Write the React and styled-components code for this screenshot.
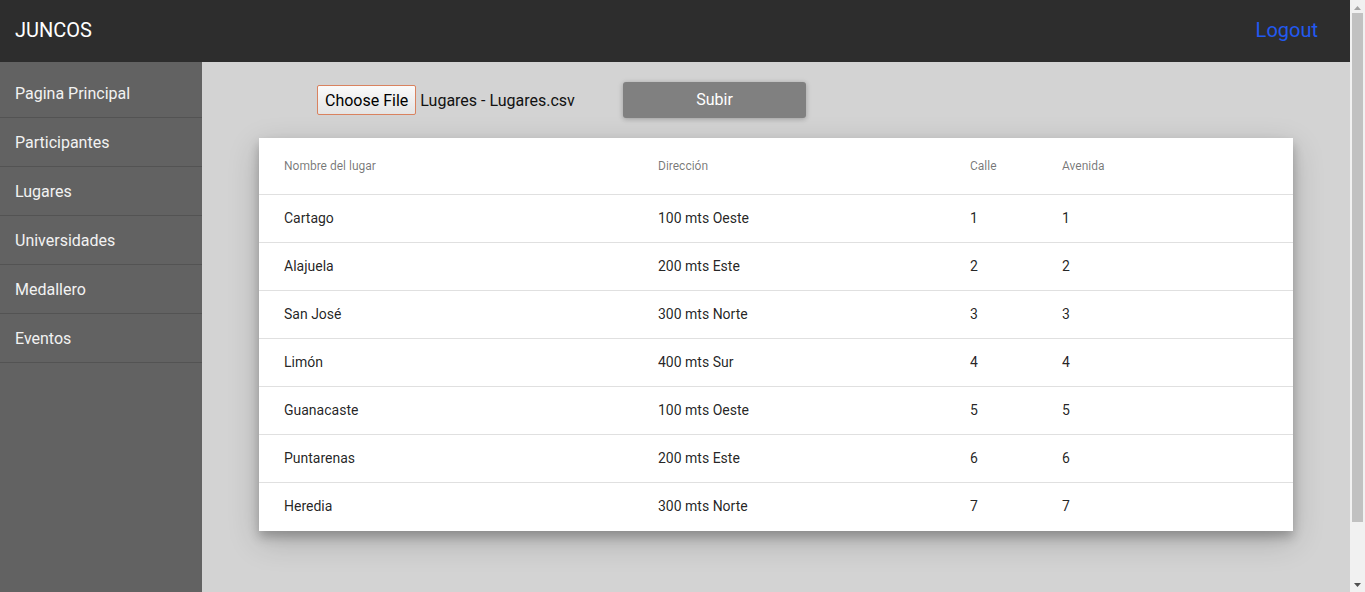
import React from "react";
import styled, { createGlobalStyle } from "styled-components";

const GlobalStyle = createGlobalStyle`
  html, body { margin: 0; padding: 0; }
  html, body { overflow: hidden; }
  body { font-family: Roboto, "Noto Sans", Arial, sans-serif; background: #d3d3d3; }
  * { box-sizing: border-box; }
`;

const Page = styled.div`
  display: flex;
  flex-direction: column;
  min-height: 652px;
  margin-right: 15px;
`;

const TopBar = styled.header`
  height: 62px;
  background: #2d2d2d;
  display: flex;
  align-items: center;
  justify-content: space-between;
  padding: 0 32px 0 15px;
  flex-shrink: 0;
`;

const Brand = styled.div`
  color: #ffffff;
  font-size: 20px;
  margin-top: -2px;
`;

const LogoutLink = styled.a`
  color: #2259f0;
  font-size: 20px;
  text-decoration: none;
  margin-top: -2px;
  cursor: pointer;
`;

const Body = styled.div`
  display: flex;
  flex: 1;
`;

const Sidebar = styled.nav`
  width: 202px;
  flex-shrink: 0;
  background: #626262;
  padding-top: 7px;
`;

const NavItem = styled.a`
  display: flex;
  align-items: center;
  height: 49px;
  padding: 1px 15px 0;
  color: #f2f2f2;
  font-size: 16px;
  border-bottom: 1px solid #535353;
  text-decoration: none;
  cursor: pointer;
`;

const Main = styled.main`
  flex: 1;
  padding: 20px 57px;
`;

const UploadRow = styled.div`
  display: flex;
  align-items: center;
  height: 36px;
  padding-left: 58px;
`;

const FileBlock = styled.div`
  display: flex;
  align-items: center;
  width: 306px;
`;

const ChooseButton = styled.button`
  height: 30px;
  padding: 0 7px;
  font-family: Roboto, "Noto Sans", Arial, sans-serif;
  font-size: 16px;
  color: #000;
  background: linear-gradient(#fafafa, #e4e4e4);
  border: 1px solid #d9825f;
  border-radius: 2px;
  cursor: pointer;
`;

const FileName = styled.span`
  margin-left: 4px;
  font-size: 16px;
  color: #111;
`;

const SubmitButton = styled.button`
  width: 183px;
  height: 36px;
  padding: 0 0 2px;
  background: #808080;
  color: #ffffff;
  font-family: Roboto, "Noto Sans", Arial, sans-serif;
  font-size: 16px;
  border: none;
  border-radius: 3px;
  box-shadow: 0 1px 6px rgba(0, 0, 0, 0.14), 0 1px 4px rgba(0, 0, 0, 0.14);
  cursor: pointer;
`;

const Card = styled.div`
  margin-top: 20px;
  background: #ffffff;
  box-shadow: 0 10px 30px rgba(0, 0, 0, 0.19), 0 6px 10px rgba(0, 0, 0, 0.23);
`;

const Row = styled.div`
  display: grid;
  grid-template-columns: 374px 312px 92px 1fr;
  align-items: center;
  height: ${(p) => (p.$head ? "57px" : "48px")};
  padding: 0 24px ${(p) => (p.$head ? "0" : p.$last ? "2px" : "1px")} 25px;
  border-bottom: ${(p) => (p.$last ? "none" : "1px solid #e0e0e0")};
  font-size: ${(p) => (p.$head ? "12px" : "14px")};
  color: ${(p) => (p.$head ? "rgba(0,0,0,0.54)" : "rgba(0,0,0,0.87)")};
`;

const Cell = styled.div`
  white-space: nowrap;
`;

/* imitation of the browser's classic vertical scrollbar, lying over the page edge */
const ScrollTrack = styled.div`
  position: fixed;
  top: 0;
  right: 0;
  width: 15px;
  height: 100vh;
  background: #f1f1f1;
  display: flex;
  flex-direction: column;
  align-items: center;
`;

const ScrollArrow = styled.div`
  height: 15px;
  width: 15px;
  display: flex;
  align-items: center;
  justify-content: center;
  flex-shrink: 0;
`;

const ScrollThumb = styled.div`
  width: 11px;
  margin-top: -2px;
  height: 509px;
  background: #c1c1c1;
  flex-shrink: 0;
`;

const ScrollSpacer = styled.div`
  flex: 1;
`;

const navItems = [
  "Pagina Principal",
  "Participantes",
  "Lugares",
  "Universidades",
  "Medallero",
  "Eventos",
];

const rows = [
  ["Cartago", "100 mts Oeste", "1", "1"],
  ["Alajuela", "200 mts Este", "2", "2"],
  ["San José", "300 mts Norte", "3", "3"],
  ["Limón", "400 mts Sur", "4", "4"],
  ["Guanacaste", "100 mts Oeste", "5", "5"],
  ["Puntarenas", "200 mts Este", "6", "6"],
  ["Heredia", "300 mts Norte", "7", "7"],
];

export default function App() {
  return (
    <>
      <GlobalStyle />
      <Page>
        <TopBar>
          <Brand>JUNCOS</Brand>
          <LogoutLink>Logout</LogoutLink>
        </TopBar>
        <Body>
          <Sidebar>
            {navItems.map((n) => (
              <NavItem key={n}>{n}</NavItem>
            ))}
          </Sidebar>
          <Main>
            <UploadRow>
              <FileBlock>
                <ChooseButton type="button">Choose File</ChooseButton>
                <FileName>Lugares - Lugares.csv</FileName>
              </FileBlock>
              <SubmitButton type="button">Subir</SubmitButton>
            </UploadRow>
            <Card>
              <Row $head>
                <Cell>Nombre del lugar</Cell>
                <Cell>Dirección</Cell>
                <Cell>Calle</Cell>
                <Cell>Avenida</Cell>
              </Row>
              {rows.map((r, i) => (
                <Row key={r[0]} $last={i === rows.length - 1}>
                  {r.map((c, j) => (
                    <Cell key={j}>{c}</Cell>
                  ))}
                </Row>
              ))}
            </Card>
          </Main>
        </Body>
      </Page>
      <ScrollTrack>
        <ScrollArrow>
          <svg width="7" height="4" viewBox="0 0 7 4">
            <path d="M0 4 L3.5 0 L7 4 Z" fill="#a3a3a3" />
          </svg>
        </ScrollArrow>
        <ScrollThumb />
        <ScrollSpacer />
        <ScrollArrow>
          <svg width="7" height="4" viewBox="0 0 7 4">
            <path d="M0 0 L7 0 L3.5 4 Z" fill="#505050" />
          </svg>
        </ScrollArrow>
      </ScrollTrack>
    </>
  );
}
